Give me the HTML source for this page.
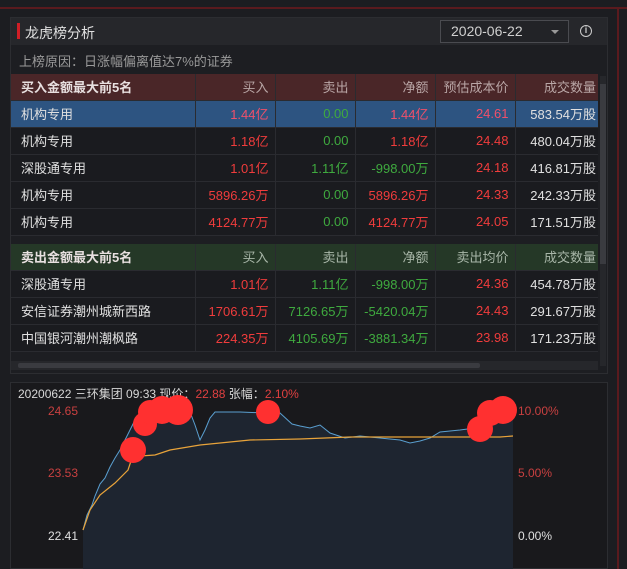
<!DOCTYPE html>
<html><head><meta charset="utf-8"><style>
*{margin:0;padding:0;box-sizing:border-box}
body{width:627px;height:569px;background:#1c1d21;position:relative;overflow:hidden;font-family:"Liberation Sans","Noto Sans CJK SC",sans-serif;font-size:13px;color:#d8d8d8}
.a{position:absolute}
table{border-collapse:collapse;position:absolute;left:11px;width:587px;table-layout:fixed}
td{height:27px;border-right:1px solid #2a2b30;border-bottom:1px solid #2a2b30;text-align:right;padding-right:6px;white-space:nowrap}
td:first-child{text-align:left;padding-left:10px}
td:last-child{border-right:none;padding-right:2px}
.r{color:#f03c3c}.g{color:#3faa3f}.w{color:#e0e0e0}
tr.hb td{background:#4a2628;color:#b9a6a6;height:26px}
tr.hs td{background:#253827;color:#a8b6a8;height:26px}
tr.hb td:first-child,tr.hs td:first-child{font-weight:bold;color:#e8e0e0}
tr.sel td{background:#2d5481}
tr.sel .r{color:#f0506a}
tr td{background:#1a1b1f}
</style></head><body>
<div class="a" style="left:0;top:7px;width:627px;height:2px;background:#5a1a1e"></div>
<div class="a" style="left:617px;top:8px;width:2px;height:561px;background:#5a1a1e"></div>
<div class="a" style="left:10px;top:17px;width:598px;height:357px;background:#1d1e22;border:1px solid #2c2d31"></div>
<div class="a" style="left:11px;top:18px;width:596px;height:27px;background:#26272b"></div>
<div class="a" style="left:17px;top:23px;width:3px;height:16px;background:#d01e26"></div>
<div class="a" style="left:25px;top:23px;font-size:14px;color:#e0e0e0">龙虎榜分析</div>
<div class="a" style="left:440px;top:20px;width:129px;height:23px;border:1px solid #4a4b50;background:#222327"></div>
<div class="a" style="left:451px;top:23px;font-size:14px;color:#d0d0d0">2020-06-22</div>
<div class="a" style="left:551px;top:30px;width:0;height:0;border-left:4px solid transparent;border-right:4px solid transparent;border-top:4px solid #999"></div>
<div class="a" style="left:580px;top:25px;width:12px;height:12px;border:1.5px solid #ccc;border-radius:50%;font-size:9px;line-height:9px;text-align:center;color:#ccc;font-weight:bold">i</div>
<div class="a" style="left:19px;top:51px;color:#9a9a9a">上榜原因：日涨幅偏离值达7%的证券</div>
<table style="top:74px">
<colgroup><col style="width:184px"><col style="width:80px"><col style="width:80px"><col style="width:80px"><col style="width:80px"><col style="width:83px"></colgroup>
<tr class="hb"><td>买入金额最大前5名</td><td>买入</td><td>卖出</td><td>净额</td><td>预估成本价</td><td>成交数量</td></tr>
<tr class="sel"><td class="w">机构专用</td><td class="r">1.44亿</td><td class="g">0.00</td><td class="r">1.44亿</td><td class="r">24.61</td><td class="w">583.54万股</td></tr>
<tr><td class="w">机构专用</td><td class="r">1.18亿</td><td class="g">0.00</td><td class="r">1.18亿</td><td class="r">24.48</td><td class="w">480.04万股</td></tr>
<tr><td class="w">深股通专用</td><td class="r">1.01亿</td><td class="g">1.11亿</td><td class="g">-998.00万</td><td class="r">24.18</td><td class="w">416.81万股</td></tr>
<tr><td class="w">机构专用</td><td class="r">5896.26万</td><td class="g">0.00</td><td class="r">5896.26万</td><td class="r">24.33</td><td class="w">242.33万股</td></tr>
<tr><td class="w">机构专用</td><td class="r">4124.77万</td><td class="g">0.00</td><td class="r">4124.77万</td><td class="r">24.05</td><td class="w">171.51万股</td></tr>
</table>
<table style="top:244px">
<colgroup><col style="width:184px"><col style="width:80px"><col style="width:80px"><col style="width:80px"><col style="width:80px"><col style="width:83px"></colgroup>
<tr class="hs"><td>卖出金额最大前5名</td><td>买入</td><td>卖出</td><td>净额</td><td>卖出均价</td><td>成交数量</td></tr>
<tr><td class="w">深股通专用</td><td class="r">1.01亿</td><td class="g">1.11亿</td><td class="g">-998.00万</td><td class="r">24.36</td><td class="w">454.78万股</td></tr>
<tr><td class="w">安信证券潮州城新西路</td><td class="r">1706.61万</td><td class="g">7126.65万</td><td class="g">-5420.04万</td><td class="r">24.43</td><td class="w">291.67万股</td></tr>
<tr><td class="w">中国银河潮州潮枫路</td><td class="r">224.35万</td><td class="g">4105.69万</td><td class="g">-3881.34万</td><td class="r">23.98</td><td class="w">171.23万股</td></tr>
</table>
<div class="a" style="left:600px;top:76px;width:6px;height:290px;background:#26272b"></div>
<div class="a" style="left:600px;top:84px;width:6px;height:180px;background:#3a3b40"></div>
<div class="a" style="left:11px;top:361px;width:587px;height:9px;background:#26272b"></div>
<div class="a" style="left:18px;top:363px;width:462px;height:5px;background:#3a3b40;border-radius:2px"></div>
<div class="a" style="left:10px;top:382px;width:598px;height:187px;background:#19191c;border:1px solid #2c2d31"></div>
<div class="a" style="left:18px;top:385px;font-size:12px;color:#d8d8d8">20200622 三环集团 09:33 现价：<span style="color:#e04040">22.88</span> 张幅：<span style="color:#e04040">2.10%</span></div>
<div class="a" style="left:48px;top:404px;font-size:12px;color:#c84040">24.65</div>
<div class="a" style="left:48px;top:466px;font-size:12px;color:#c84040">23.53</div>
<div class="a" style="left:48px;top:529px;font-size:12px;color:#e0e0e0">22.41</div>
<div class="a" style="left:518px;top:404px;font-size:12px;color:#c84040">10.00%</div>
<div class="a" style="left:518px;top:466px;font-size:12px;color:#c84040">5.00%</div>
<div class="a" style="left:518px;top:529px;font-size:12px;color:#e0e0e0">0.00%</div>
<svg class="a" style="left:0;top:0" width="627" height="569">
<polygon points="83,530 87,515 92,505 95,496 100,484 105,478 110,467 115,458 120,450 125,440 130,430 135,420 145,412 160,410 175,410 190,412 195,425 200,440 205,430 210,418 215,412 240,412 265,413 272,418 280,413 292,424 300,426 310,428 320,425 330,433 345,438 360,436 380,438 400,440 410,443 420,441 430,438 440,432 460,430 475,428 490,416 513,414 513,569 83,569" fill="#1e2530"/>
<polyline points="83,530 87,515 92,505 95,496 100,484 105,478 110,467 115,458 120,450 125,440 130,430 135,420 145,412 160,410 175,410 190,412 195,425 200,440 205,430 210,418 215,412 240,412 265,413 272,418 280,413 292,424 300,426 310,428 320,425 330,433 345,438 360,436 380,438 400,440 410,443 420,441 430,438 440,432 460,430 475,428 490,416 513,414" fill="none" stroke="#5a9fd0" stroke-width="1"/>
<polyline points="83,530 90,510 100,495 115,483 128,470 132,458 140,456 155,455 170,450 200,445 250,440 300,439 350,437 420,437 480,437 500,437 513,436" fill="none" stroke="#e8a33a" stroke-width="1.2"/>
<g fill="#ff3030">
<circle cx="133" cy="450" r="13"/><circle cx="145" cy="424" r="12"/><circle cx="150" cy="412" r="12"/><circle cx="162" cy="410" r="14"/><circle cx="178" cy="410" r="15"/><circle cx="268" cy="412" r="12"/><circle cx="480" cy="429" r="13"/><circle cx="490" cy="413" r="13"/><circle cx="503" cy="410" r="14"/></g>
</svg>
</body></html>
